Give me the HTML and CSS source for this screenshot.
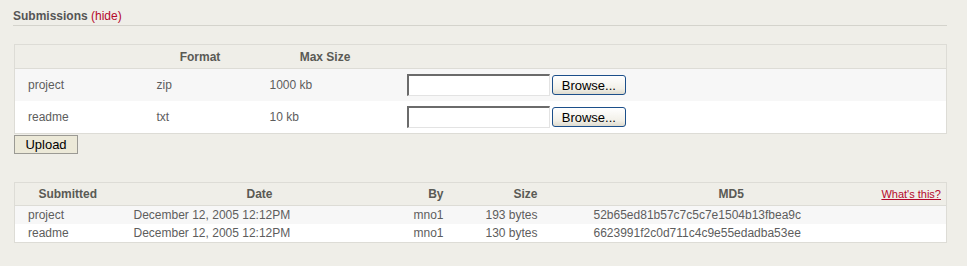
FILE: index.html
```html
<!DOCTYPE html>
<html lang="en">
<head>
    <meta charset="UTF-8">
    <title>Submissions</title>
    <link rel="stylesheet" href="styles.css">
</head>
<body>
    <div class="page">
        <h2 class="section-title">Submissions <a href="#" class="hide-link">(hide)</a></h2>

        <form class="upload-form">
            <table class="grid files">
                <colgroup>
                    <col class="c-name">
                    <col class="c-format">
                    <col class="c-max">
                    <col>
                </colgroup>
                <thead>
                    <tr>
                        <th></th>
                        <th>Format</th>
                        <th>Max Size</th>
                        <th></th>
                    </tr>
                </thead>
                <tbody>
                    <tr class="odd">
                        <td>project</td>
                        <td>zip</td>
                        <td>1000 kb</td>
                        <td class="file-cell">
                            <input type="text" class="file-path">
                            <button type="button" class="browse">Browse...</button>
                        </td>
                    </tr>
                    <tr class="even">
                        <td>readme</td>
                        <td>txt</td>
                        <td>10 kb</td>
                        <td class="file-cell">
                            <input type="text" class="file-path">
                            <button type="button" class="browse">Browse...</button>
                        </td>
                    </tr>
                </tbody>
            </table>
            <button type="submit" class="upload">Upload</button>
        </form>

        <table class="grid history">
            <colgroup>
                <col class="c-sub">
                <col class="c-date">
                <col class="c-by">
                <col class="c-size">
                <col>
            </colgroup>
            <thead>
                <tr>
                    <th>Submitted</th>
                    <th>Date</th>
                    <th class="right">By</th>
                    <th class="right">Size</th>
                    <th class="md5-head">
                        <div class="md5-wrap">
                            <span>MD5</span>
                            <a href="#" class="whats">What's this?</a>
                        </div>
                    </th>
                </tr>
            </thead>
            <tbody>
                <tr class="odd">
                    <td>project</td>
                    <td>December 12, 2005 12:12PM</td>
                    <td class="right">mno1</td>
                    <td class="right">193 bytes</td>
                    <td class="md5">52b65ed81b57c7c5c7e1504b13fbea9c</td>
                </tr>
                <tr class="even">
                    <td>readme</td>
                    <td>December 12, 2005 12:12PM</td>
                    <td class="right">mno1</td>
                    <td class="right">130 bytes</td>
                    <td class="md5">6623991f2c0d711c4c9e55edadba53ee</td>
                </tr>
            </tbody>
        </table>
    </div>
</body>
</html>
```

FILE: styles.css
```css
body {
    margin: 0;
    background: #efeee8;
    font-family: "Liberation Sans", Arial, sans-serif;
    font-size: 12px;
    color: #5d5d5d;
}
.page {
    padding: 11px 20px 0 13px;
}
.section-title {
    margin: 0;
    padding-bottom: 3px;
    font-size: 12px;
    font-weight: bold;
    color: #555;
    line-height: 11px;
    border-bottom: 1px solid #d4d3cc;
}
.hide-link {
    color: #b5082c;
    font-weight: normal;
    text-decoration: none;
}
.upload-form {
    margin: 18px 0 0 1px;
}
.grid {
    width: 100%;
    border-collapse: collapse;
    table-layout: fixed;
    border: 1px solid #dddcd6;
}
.grid th {
    font-weight: bold;
    color: #5a5a55;
    text-align: center;
    padding: 0 13px;
    border-bottom: 1px solid #dddcd6;
}
.grid td {
    padding: 0 13px;
    white-space: nowrap;
}
.grid .right {
    text-align: right;
}
.odd {
    background: #f7f7f7;
}
.even {
    background: #fff;
}

/* upload table */
.files .c-name { width: 129px; }
.files .c-format { width: 113px; }
.files .c-max { width: 137px; }
.files th {
    height: 23px;
}
.files td {
    height: 32px;
}
.files .file-cell {
    padding-left: 13px;
}
.file-path {
    width: 143px;
    height: 22px;
    box-sizing: border-box;
    margin: 0;
    vertical-align: middle;
    background: #fff;
    border-style: solid;
    border-width: 2px 1px 1px 2px;
    border-color: #6b6b6b #e3e3e3 #e3e3e3 #6b6b6b;
}
.browse {
    width: 74px;
    height: 20px;
    margin: 0 0 0 -1px;
    padding: 0;
    vertical-align: middle;
    font-family: "Liberation Sans", Arial, sans-serif;
    font-size: 13px;
    color: #000;
    border: 1px solid #1c4f8a;
    border-radius: 3px;
    background: linear-gradient(#ffffff, #f2f0e8 70%, #dedbcf);
}
.upload {
    display: block;
    margin-top: 1px;
    width: 64px;
    height: 19px;
    padding: 0;
    font-family: "Liberation Sans", Arial, sans-serif;
    font-size: 13px;
    color: #000;
    background: #ece9d8;
    border: 1px solid #9b9a94;
}

/* history table */
.history {
    margin: 28px 0 0 1px;
    width: calc(100% - 1px);
}
.history .c-sub { width: 106px; }
.history .c-date { width: 278px; }
.history .c-by { width: 58px; }
.history .c-size { width: 94px; }
.history th {
    height: 22px;
}
.history td {
    height: 18px;
}
.history .md5 {
    padding-left: 43px;
}
.history .md5-head {
    padding: 0 5px 0 0;
}
.md5-wrap {
    display: grid;
    grid-template-columns: 168px auto 1fr;
    align-items: center;
}
.md5-wrap span {
    grid-column: 2;
}
.whats {
    grid-column: 3;
    justify-self: end;
    font-size: 11px;
    font-weight: normal;
    color: #b5082c;
    text-decoration: underline;
}
```
